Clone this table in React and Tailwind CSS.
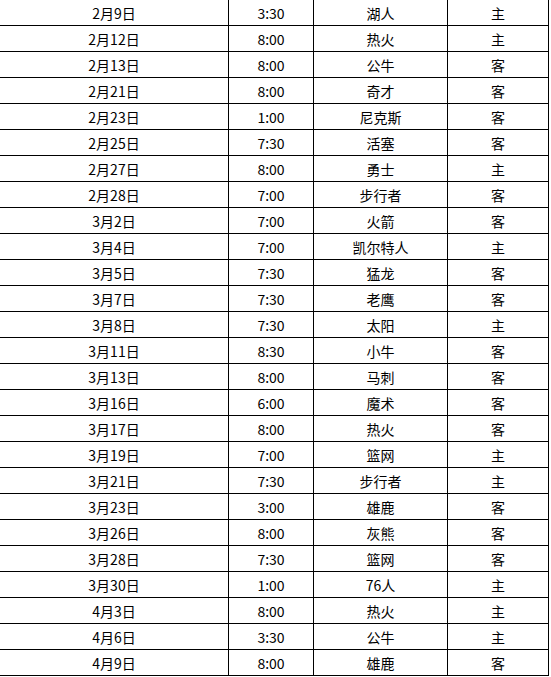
import React from 'react';

const games = [
    ['2月9日', '3:30', '湖人', '主'],
    ['2月12日', '8:00', '热火', '主'],
    ['2月13日', '8:00', '公牛', '客'],
    ['2月21日', '8:00', '奇才', '客'],
    ['2月23日', '1:00', '尼克斯', '客'],
    ['2月25日', '7:30', '活塞', '客'],
    ['2月27日', '8:00', '勇士', '主'],
    ['2月28日', '7:00', '步行者', '客'],
    ['3月2日', '7:00', '火箭', '客'],
    ['3月4日', '7:00', '凯尔特人', '主'],
    ['3月5日', '7:30', '猛龙', '客'],
    ['3月7日', '7:30', '老鹰', '客'],
    ['3月8日', '7:30', '太阳', '主'],
    ['3月11日', '8:30', '小牛', '客'],
    ['3月13日', '8:00', '马刺', '客'],
    ['3月16日', '6:00', '魔术', '客'],
    ['3月17日', '8:00', '热火', '客'],
    ['3月19日', '7:00', '篮网', '主'],
    ['3月21日', '7:30', '步行者', '主'],
    ['3月23日', '3:00', '雄鹿', '客'],
    ['3月26日', '8:00', '灰熊', '客'],
    ['3月28日', '7:30', '篮网', '客'],
    ['3月30日', '1:00', '76人', '主'],
    ['4月3日', '8:00', '热火', '主'],
    ['4月6日', '3:30', '公牛', '主'],
    ['4月9日', '8:00', '雄鹿', '客'],
];

const App = () => {
    return (
        <div className="bg-white w-[551px] h-[677px] overflow-hidden">
            <table
                className="-mt-px -ml-px border-collapse text-[14px] text-black leading-none"
                style={{ fontFamily: '"Noto Sans CJK SC", "Noto Sans", sans-serif' }}
            >
                <colgroup>
                    <col className="w-[229px]" />
                    <col className="w-[85px]" />
                    <col className="w-[134px]" />
                    <col className="w-[101px]" />
                </colgroup>
                <tbody>
                    {games.map((g) => (
                        <tr key={g[0]} className="h-[26px]">
                            {g.map((cell, i) => (
                                <td key={i} className="border border-black text-center align-middle p-0">
                                    {cell}
                                </td>
                            ))}
                        </tr>
                    ))}
                </tbody>
            </table>
        </div>
    );
};

export default App;
